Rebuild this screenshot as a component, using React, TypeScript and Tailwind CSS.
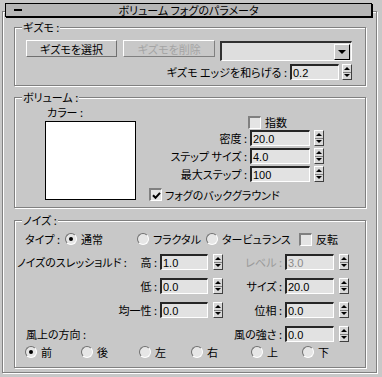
import React from "react";

const BG = "bg-[#c8c8c8]";

function Group({ label, className, children }: { label: string; className: string; children: React.ReactNode }) {
  return (
    <div className={`relative border border-[#808080] shadow-[1px_1px_0_#fff,inset_1px_1px_0_#fff] ${className}`}>
      <span className={`absolute left-[7px] top-[-7px] px-[1px] leading-[12px] ${BG}`}>{label}</span>
      {children}
    </div>
  );
}

function Spin() {
  return (
    <div className="flex flex-col w-[10px] h-[16px] border border-t-white border-l-white border-b-[#404040] border-r-[#404040] bg-[#d8d8d8]">
      <div className="flex-1 flex items-center justify-center border-b border-b-[#808080]">
        <div className="w-0 h-0 border-l-[3px] border-r-[3px] border-b-[3px] border-l-transparent border-r-transparent border-b-black" />
      </div>
      <div className="flex-1 flex items-center justify-center">
        <div className="w-0 h-0 border-l-[3px] border-r-[3px] border-t-[3px] border-l-transparent border-r-transparent border-t-black" />
      </div>
    </div>
  );
}

function Field({ value, width, disabled }: { value: string; width: string; disabled?: boolean }) {
  return (
    <div
      className={`${width} h-[16px] flex items-center pl-[1px] bg-[#e2e2e2] border-t-2 border-l-2 border-t-[#262626] border-l-[#262626] border-b border-r border-b-white border-r-white font-['Liberation_Sans',sans-serif] text-[11px] leading-[12px] tracking-normal ${disabled ? "text-[#8a8a8a]" : "text-black"}`}
    >
      {value}
    </div>
  );
}

function Check({ checked }: { checked?: boolean }) {
  return (
    <div className="w-[13px] h-[13px] shrink-0 flex items-center justify-center bg-[#e4e4e4] border-t-2 border-l-2 border-t-[#808080] border-l-[#808080] border-b border-r border-b-white border-r-white">
      {checked && (
        <svg viewBox="0 0 9 9" className="w-[9px] h-[9px]">
          <path d="M1 4.2 L3.5 6.8 L8 1.8" stroke="black" strokeWidth="2" fill="none" />
        </svg>
      )}
    </div>
  );
}

function Radio({ checked }: { checked?: boolean }) {
  return (
    <div className="w-[12px] h-[12px] shrink-0 rounded-full flex items-center justify-center bg-[#e6e6e6] border border-t-[#707070] border-l-[#707070] border-b-white border-r-white">
      {checked && <div className="w-[4px] h-[4px] rounded-full bg-black" />}
    </div>
  );
}

function RadioItem({ label, checked, className }: { label: string; checked?: boolean; className: string }) {
  return (
    <div className={`flex items-center gap-[4px] ${className}`}>
      <Radio checked={checked} />
      <span>{label}</span>
    </div>
  );
}

function NoiseRow({ left, leftLabel, leftValue, rightLabel, rightValue, rightDisabled }: {
  left?: string; leftLabel?: string; leftValue?: string; rightLabel: string; rightValue: string; rightDisabled?: boolean;
}) {
  return (
    <div className="flex items-center h-[16px]">
      <div className="w-[142px] flex justify-between pl-[2px]">
        <span className={leftLabel ? "" : "pl-[9px]"}>{left}</span>
        <span>{leftLabel}</span>
      </div>
      {leftValue ? (
        <>
          <div className="ml-[3px]"><Field value={leftValue} width="w-[48px]" /></div>
          <div className="ml-[5px]"><Spin /></div>
        </>
      ) : (
        <div className="w-[66px]" />
      )}
      <span className={`w-[59px] text-right ${rightDisabled ? "text-[#9a9a9a]" : ""}`}>{rightLabel}</span>
      <div className="ml-[3px]"><Field value={rightValue} width="w-[49px]" disabled={rightDisabled} /></div>
      <div className="ml-[5px]"><Spin /></div>
    </div>
  );
}

function VolRow({ label, value }: { label: string; value: string }) {
  return (
    <div className="flex items-center h-[16px]">
      <span className="w-[98px] text-right">{label}</span>
      <div className="ml-[3px]"><Field value={value} width="w-[60px]" /></div>
      <div className="ml-[4px]"><Spin /></div>
    </div>
  );
}

export default function App() {
  return (
    <div className={`relative w-[382px] h-[377px] overflow-hidden ${BG} text-black text-[11px] leading-[14px] font-['Noto_Sans_CJK_JP','Noto_Sans_CJK_SC',sans-serif] [font-feature-settings:'palt']`}>
      {/* rollout title */}
      <div className="absolute left-[5px] top-[3px] z-10 w-[367px] h-[14px] flex items-center justify-center bg-[#b6b6b6] border border-black shadow-[1px_1px_0_#000]">
        <div className="absolute left-[8px] top-[5px] w-[8px] h-[2px] bg-black" />
        <span className="leading-[12px]">ボリューム フォグのパラメータ</span>
      </div>

      <div className="ml-[2px] mt-[11px] w-[375px] h-[362px] border border-[#808080] shadow-[1px_1px_0_#fff,inset_1px_1px_0_#fff] pl-[11px] pt-[15px]">
        {/* gizmo */}
        <Group label="ギズモ :" className="w-[352px] h-[59px] pt-[12px] pl-[11px] pr-[13px]">
          <div className="flex items-start">
            <button className="w-[92px] h-[17px] flex items-center justify-center border border-t-white border-l-white border-b-[#707070] border-r-[#707070] leading-[12px]">
              ギズモを選択
            </button>
            <button className="ml-[6px] w-[93px] h-[17px] flex items-center justify-center border border-t-white border-l-white border-b-[#808080] border-r-[#808080] text-[#a4a4a4] leading-[12px]">
              ギズモを削除
            </button>
            <div className="ml-[5px] mt-[1px] w-[133px] h-[20px] flex justify-end items-center pr-[1px] bg-[#dedede] border-t-2 border-l-2 border-t-[#303030] border-l-[#303030] border-b border-r border-b-white border-r-white">
              <div className="w-[16px] h-[16px] flex items-center justify-center bg-[#c8c8c8] border border-t-white border-l-white border-b-black border-r-black">
                <div className="w-0 h-0 border-l-[4px] border-r-[4px] border-t-[4px] border-l-transparent border-r-transparent border-t-black" />
              </div>
            </div>
          </div>
          <div className="mt-[3px] flex items-center justify-end h-[16px]">
            <span>ギズモ エッジを和らげる :</span>
            <div className="ml-[3px]"><Field value="0.2" width="w-[49px]" /></div>
            <div className="ml-[3px]"><Spin /></div>
          </div>
        </Group>

        {/* volume */}
        <Group label="ボリューム :" className="mt-[11px] w-[352px] h-[111px] flex">
          <div className="pl-[30px] pt-[8px]">
            <div className="pl-[2px] leading-[12px]">カラー :</div>
            <div className="mt-[3px] w-[91px] h-[79px] bg-white border border-black" />
          </div>
          <div className="ml-[13px] pt-[17px] flex flex-col">
            <div className="flex items-center h-[14px] pl-[99px] gap-[4px]">
              <Check />
              <span>指数</span>
            </div>
            <div className="mt-[1px] flex flex-col gap-[2px]">
              <VolRow label="密度 :" value="20.0" />
              <VolRow label="ステップ サイズ :" value="4.0" />
              <VolRow label="最大ステップ :" value="100" />
            </div>
            <div className="mt-[6px] flex items-center h-[13px] gap-[3px]">
              <Check checked />
              <span>フォグのバックグラウンド</span>
            </div>
          </div>
        </Group>

        {/* noise */}
        <Group label="ノイズ :" className="mt-[12px] w-[352px] h-[148px] pt-[11px]">
          <div className="flex items-center h-[14px] pl-[10px]">
            <span className="w-[40px]">タイプ :</span>
            <RadioItem label="通常" checked className="w-[72px]" />
            <RadioItem label="フラクタル" className="w-[69px]" />
            <RadioItem label="タービュランス" className="w-[93px]" />
            <div className="flex items-center gap-[4px]">
              <Check />
              <span>反転</span>
            </div>
          </div>
          <div className="mt-[8px] flex flex-col gap-[8px]">
            <NoiseRow left="ノイズのスレッショルド :" leftLabel="高 :" leftValue="1.0" rightLabel="レベル :" rightValue="3.0" rightDisabled />
            <NoiseRow leftLabel="低 :" leftValue="0.0" rightLabel="サイズ :" rightValue="20.0" />
            <NoiseRow leftLabel="均一性 :" leftValue="0.0" rightLabel="位相 :" rightValue="0.0" />
            <NoiseRow left="風上の方向 :" rightLabel="風の強さ :" rightValue="0.0" />
          </div>
          <div className="mt-[4px] flex items-center h-[12px] pl-[10px]">
            <RadioItem label="前" checked className="w-[56px]" />
            <RadioItem label="後" className="w-[58px]" />
            <RadioItem label="左" className="w-[52px]" />
            <RadioItem label="右" className="w-[60px]" />
            <RadioItem label="上" className="w-[51px]" />
            <RadioItem label="下" className="w-[40px]" />
          </div>
        </Group>
      </div>
    </div>
  );
}
